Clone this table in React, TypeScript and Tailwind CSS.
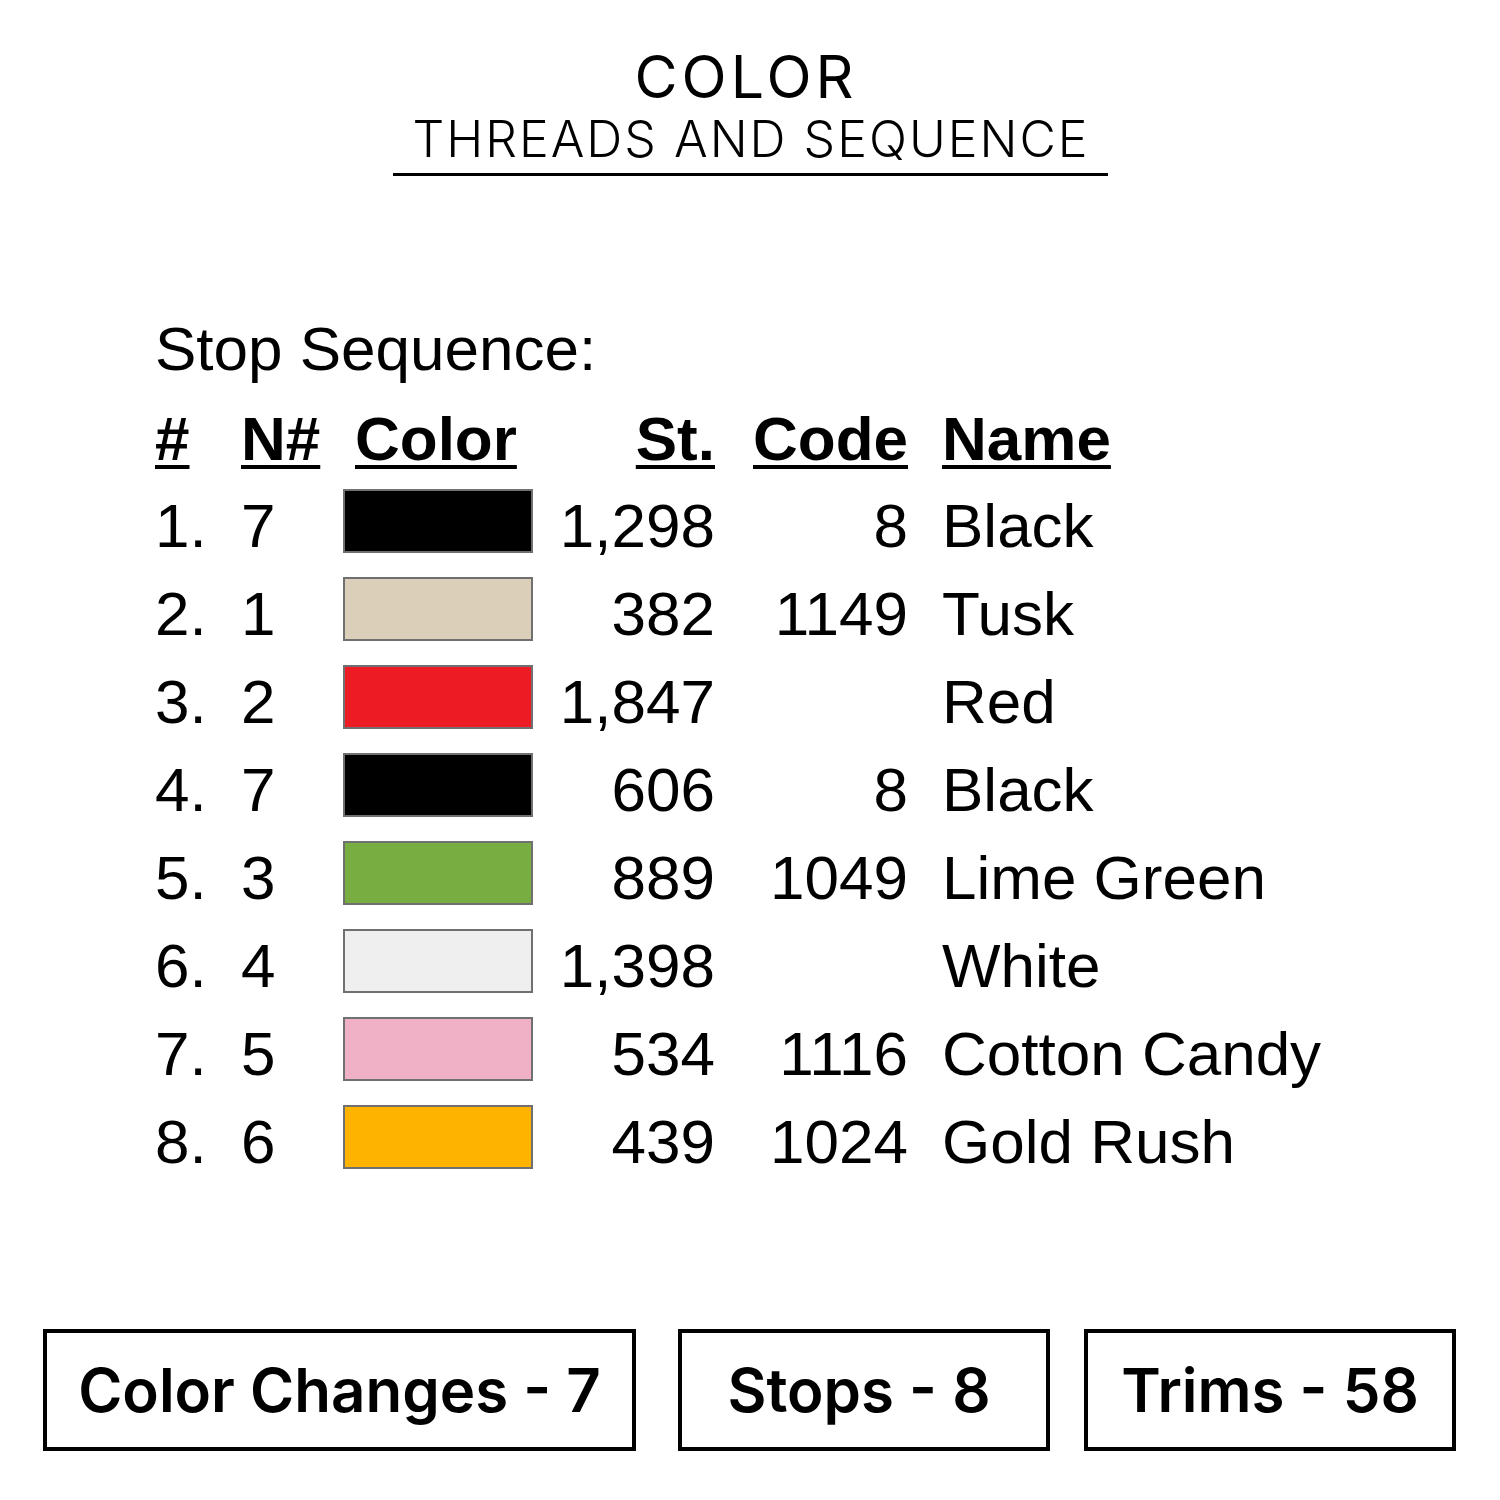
const rows = [
  { n: "1.", needle: "7", color: "#000000", st: "1,298", code: "8", name: "Black" },
  { n: "2.", needle: "1", color: "#dccfba", st: "382", code: "1149", name: "Tusk" },
  { n: "3.", needle: "2", color: "#ed1c24", st: "1,847", code: "", name: "Red" },
  { n: "4.", needle: "7", color: "#000000", st: "606", code: "8", name: "Black" },
  { n: "5.", needle: "3", color: "#78ad42", st: "889", code: "1049", name: "Lime Green" },
  { n: "6.", needle: "4", color: "#efefef", st: "1,398", code: "", name: "White" },
  { n: "7.", needle: "5", color: "#f0b1c6", st: "534", code: "1116", name: "Cotton Candy" },
  { n: "8.", needle: "6", color: "#fdb300", st: "439", code: "1024", name: "Gold Rush" },
];

export default function App() {
  return (
    <div className="w-[1500px] h-[1500px] bg-white text-black flex flex-col">
      {/* Title */}
      <div className="flex flex-col items-center pt-[47px] font-['Inter',sans-serif]">
        <h1 className="text-[59px] leading-[59px] font-normal tracking-[4px] pl-[4px] -translate-x-[6px]">COLOR</h1>
        <h2 className="mt-[8px] text-[50px] leading-[50px] font-light tracking-[2px] pl-[2px]">THREADS AND SEQUENCE</h2>
        <div className="mt-[9px] w-[715px] h-[3px] bg-black" />
      </div>

      {/* Stop sequence table */}
      <div className="pl-[155px] mt-[137px] font-['Liberation_Sans',Arial,sans-serif] text-[62px] text-black">
        <div className="leading-[71px]">Stop Sequence:</div>
        <div className="mt-[12px] flex h-[86px] leading-[86px] font-bold">
          <div className="w-[86px]"><span className="underline decoration-4 underline-offset-[5px]">#</span></div>
          <div className="w-[102px]"><span className="underline decoration-4 underline-offset-[5px]">N#</span></div>
          <div className="w-[190px] pl-[12px]"><span className="underline decoration-4 underline-offset-[5px]">Color</span></div>
          <div className="w-[182px] text-right"><span className="underline decoration-4 underline-offset-[5px]">St.</span></div>
          <div className="w-[193px] text-right"><span className="underline decoration-4 underline-offset-[5px]">Code</span></div>
          <div className="pl-[34px]"><span className="underline decoration-4 underline-offset-[5px]">Name</span></div>
        </div>
        {rows.map((r, i) => (
          <div key={i} className="flex items-start h-[88px] leading-[88px]">
            <div className="w-[86px]">{r.n}</div>
            <div className="w-[102px]">{r.needle}</div>
            <div className="w-[190px] pt-[7px]">
              <div
                className="h-[64px] w-[190px] border-2 border-[#707070]"
                style={{ backgroundColor: r.color }}
              />
            </div>
            <div className="w-[182px] text-right">{r.st}</div>
            <div className="w-[193px] text-right">{r.code}</div>
            <div className="pl-[34px]">{r.name}</div>
          </div>
        ))}
      </div>

      {/* Summary boxes */}
      <div className="mt-[143px] pl-[43px] flex font-['Inter',sans-serif] text-[60px] font-semibold">
        <div className="w-[593px] h-[122px] border-4 border-black flex items-center justify-center">
          Color Changes - 7
        </div>
        <div className="ml-[42px] w-[372px] h-[122px] border-4 border-black flex items-center justify-center pr-[10px]">
          Stops - 8
        </div>
        <div className="ml-[34px] w-[372px] h-[122px] border-4 border-black flex items-center justify-center">
          Trims - 58
        </div>
      </div>
    </div>
  );
}
